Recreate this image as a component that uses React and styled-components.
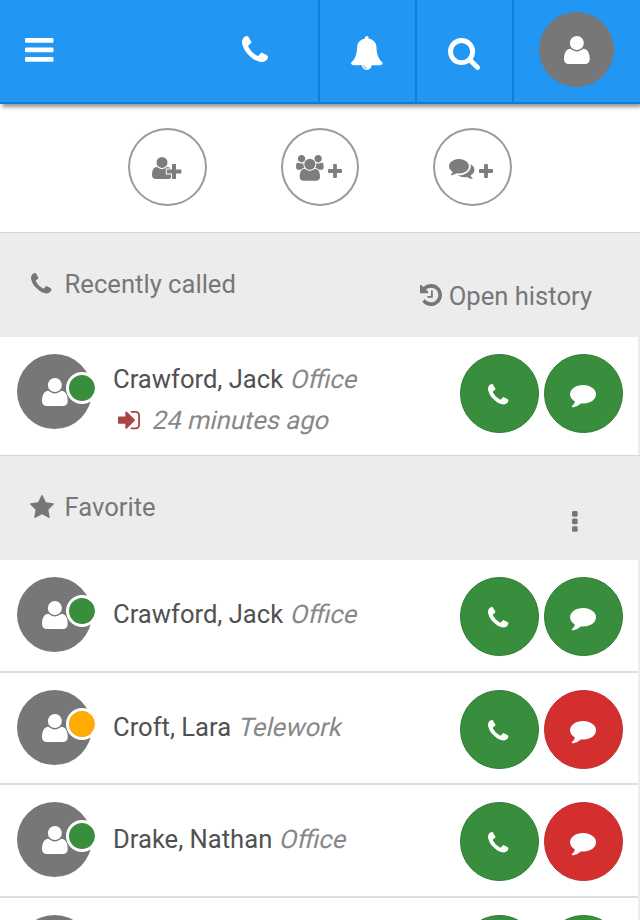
import React from "react";
import styled, { createGlobalStyle } from "styled-components";

const GlobalStyle = createGlobalStyle`
  * { box-sizing: border-box; }
  html, body { margin: 0; padding: 0; }
  body {
    height: 920px;
    overflow: hidden;
    background: #ececec;
    font-family: Roboto, "Liberation Sans", sans-serif;
    font-size: 25.6px;
    color: #515151;
  }
`;

const ICONS = {
  bars: {
    box: [128, 256, 1536, 1280],
    d: "M1664 1344v128q0 26-19 45t-45 19h-1408q-26 0-45-19t-19-45v-128q0-26 19-45t45-19h1408q26 0 45 19t19 45zm0-512v128q0 26-19 45t-45 19h-1408q-26 0-45-19t-19-45v-128q0-26 19-45t45-19h1408q26 0 45 19t19 45zm0-512v128q0 26-19 45t-45 19h-1408q-26 0-45-19t-19-45v-128q0-26 19-45t45-19h1408q26 0 45 19t19 45z",
  },
  phone: {
    box: [192, 128, 1408, 1408],
    d: "M1600 1240q0 27-10 70.5t-21 68.5q-21 50-122 106-94 51-186 51-27 0-52.5-3.5t-57.5-12.5-47.5-14.5-55.5-20.5-49-18q-98-35-175-83-128-79-264.5-215.5t-215.5-264.5q-48-77-83-175-3-9-18-49t-20.5-55.5-14.5-47.5-12.5-57.5-3.5-52.5q0-92 51-186 56-101 106-122 25-11 68.5-21t70.5-10q14 0 21 3 18 6 53 76 11 19 30 54t35 63.5 31 53.5q3 4 17.5 25t21.5 35.5 7 28.5q0 20-28.5 50t-62 55-62 53-28.5 46q0 9 5 22.5t8.5 20.5 14 24 11.5 19q76 137 174 235t235 174q2 1 19 11.5t24 14 20.5 8.5 22.5 5q18 0 46-28.5t53-62 55-62 50-28.5q14 0 28.5 7t35.5 21.5 25 17.5q25 15 53.5 31t63.5 35 54 30q70 35 76 53 3 7 3 21z",
  },
  bell: {
    box: [64, 0, 1664, 1792],
    d: "M912 1696q0-16-16-16-59 0-101.5-42.5t-42.5-101.5q0-16-16-16t-16 16q0 73 51.5 124.5t124.5 51.5q16 0 16-16zm816-288q0 52-38 90t-90 38h-448q0 106-75 181t-181 75-181-75-75-181h-448q-52 0-90-38t-38-90q50-42 91-88t85-119.5 74.5-158.5 50-206 19.5-260q0-152 117-282.5t307-158.5q-8-19-8-39 0-40 28-68t68-28 68 28 28 68q0 20-8 39 190 28 307 158.5t117 282.5q0 139 19.5 260t50 206 74.5 158.5 85 119.5 91 88z",
  },
  search: {
    box: [64, 128, 1664, 1664],
    d: "M1216 832q0-185-131.5-316.5t-316.5-131.5-316.5 131.5-131.5 316.5 131.5 316.5 316.5 131.5 316.5-131.5 131.5-316.5zm512 832q0 52-38 90t-90 38q-54 0-90-38l-343-342q-179 124-399 124-143 0-273.5-55.5t-225-150-150-225-55.5-273.5 55.5-273.5 150-225 225-150 273.5-55.5 273.5 55.5 225 150 150 225 55.5 273.5q0 220-124 399l343 343q37 37 37 90z",
  },
  user: {
    box: [192, 128, 1408, 1536],
    d: "M1600 1405q0 120-73 189.5t-194 69.5h-874q-121 0-194-69.5t-73-189.5q0-53 3.5-103.5t14-109 26.5-108.5 43-97.5 62-81 85.5-53.5 111.5-20q9 0 42 21.5t74.5 48 108 48 133.5 21.5 133.5-21.5 108-48 74.5-48 42-21.5q61 0 111.5 20t85.5 53.5 62 81 43 97.5 26.5 108.5 14 109 3.5 103.5zm-320-893q0 159-112.5 271.5t-271.5 112.5-271.5-112.5-112.5-271.5 112.5-271.5 271.5-112.5 271.5 112.5 112.5 271.5z",
  },
  users: {
    box: [64, 0, 1920, 1792],
    d: "M657 896q-162 5-265 128h-134q-82 0-138-40.5t-56-118.5q0-353 124-353 6 0 43.5 21t97.5 42.5 119 21.5q67 0 133-23-5 37-5 66 0 139 81 256zm1071 637q0 120-73 189.5t-194 69.5h-874q-121 0-194-69.5t-73-189.5q0-53 3.5-103.5t14-109 26.5-108.5 43-97.5 62-81 85.5-53.5 111.5-20q10 0 43 21.5t73 48 107 48 135 21.5 135-21.5 107-48 73-48 43-21.5q61 0 111.5 20t85.5 53.5 62 81 43 97.5 26.5 108.5 14 109 3.5 103.5zm-1024-1277q0 106-75 181t-181 75-181-75-75-181 75-181 181-75 181 75 75 181zm704 384q0 159-112.5 271.5t-271.5 112.5-271.5-112.5-112.5-271.5 112.5-271.5 271.5-112.5 271.5 112.5 112.5 271.5zm576 225q0 78-56 118.5t-138 40.5h-134q-103-123-265-128 81-117 81-256 0-29-5-66 66 23 133 23 59 0 119-21.5t97.5-42.5 43.5-21q124 0 124 353zm-128-609q0 106-75 181t-181 75-181-75-75-181 75-181 181-75 181 75 75 181z",
  },
  plus: {
    box: [192, 128, 1408, 1408],
    d: "M1600 736v192q0 40-28 68t-68 28h-416v416q0 40-28 68t-68 28h-192q-40 0-68-28t-28-68v-416h-416q-40 0-68-28t-28-68v-192q0-40 28-68t68-28h416v-416q0-40 28-68t68-28h192q40 0 68 28t28 68v416h416q40 0 68 28t28 68z",
  },
  comment: {
    box: [0, 256, 1792, 1536],
    d: "M1792 896q0 174-120 321.5t-326 233-450 85.5q-70 0-145-8-198 175-460 242-49 14-114 22-17 2-30.5-9t-17.5-29v-1q-3-4-.5-12t2-10 4.5-9.5l6-9 7-8.5 8-9q7-8 31-34.5t34.5-38 31-39.5 32.5-51 27-59 26-76q-157-89-247.5-220t-90.5-281q0-130 71-248.5t191-204.5 286-136.5 348-50.5q244 0 450 85.5t326 233 120 321.5z",
  },
  comments: {
    box: [0, 256, 1792, 1408],
    d: "M1408 768q0 139-94 257t-256.5 186.5-353.5 68.5q-86 0-176-16-124 88-278 128-36 9-86 16h-3q-11 0-20.5-8t-11.5-21q-1-3-1-6.5t.5-6.5 2-6l2.5-5 3.5-5.5 4-5 4.5-5 4-4.5q5-6 23-25t26-29.5 22.5-29 25-38.5 20.5-44q-124-72-195-177t-71-224q0-139 94-257t256.5-186.5 353.5-68.5 353.5 68.5 256.5 186.5 94 257zm384 256q0 120-71 224.5t-195 176.5q10 24 20.5 44t25 38.5 22.5 29 26 29.5 23 25q1 1 4 4.5t4.5 5 4 5 3.5 5.5l2.5 5 2 6 .5 6.5-1 6.5q-3 14-13 22t-22 7q-50-7-86-16-154-40-278-128-90 16-176 16-271 0-472-132 58 4 88 4 161 0 309-45t264-129q125-92 192-212t67-254q0-77-23-152 129 71 204 178t75 230z",
  },
  history: {
    box: [128, 128, 1536, 1536],
    d: "M1664 896q0 156-61 298t-164 245-245 164-298 61q-172 0-327-72.5t-264-204.5q-7-10-6.5-22.5t8.5-20.5l137-138q10-9 25-9 16 2 23 12 73 95 179 147t225 52q104 0 198.5-40.5t163.5-109.5 109.5-163.5 40.5-198.5-40.5-198.5-109.5-163.5-163.5-109.5-198.5-40.5q-98 0-188 35.5t-160 101.5l137 138q31 30 14 69-17 40-59 40h-448q-26 0-45-19t-19-45v-448q0-42 40-59 39-17 69 14l130 129q107-101 244.5-156.5t284.5-55.5q156 0 298 61t245 164 164 245 61 298zm-640-288v448q0 14-9 23t-23 9h-320q-14 0-23-9t-9-23v-64q0-14 9-23t23-9h224v-352q0-14 9-23t23-9h64q14 0 23 9t9 23z",
  },
  star: {
    box: [64, 32, 1664, 1587],
    d: "M1728 647q0 22-26 48l-363 354 86 500q1 7 1 20 0 21-10.5 35.5t-30.5 14.5q-19 0-40-12l-449-236-449 236q-22 12-40 12-21 0-31.5-14.5t-10.5-35.5q0-6 2-20l86-500-364-354q-25-27-25-48 0-37 56-46l502-73 225-455q19-41 49-41t49 41l225 455 502 73q56 9 56 46z",
  },
  signIn: {
    box: [128, 256, 1536, 1280],
    d: "M1312 896q0 26-19 45l-544 544q-19 19-45 19t-45-19-19-45v-288h-448q-26 0-45-19t-19-45v-384q0-26 19-45t45-19h448v-288q0-26 19-45t45-19 45 19l544 544q19 19 19 45zm352-352v704q0 119-84.5 203.5t-203.5 84.5h-320q-13 0-22.5-9.5t-9.5-22.5q0-4-1-20t-.5-26.5 3-23.5 10-19.5 20.5-6.5h320q66 0 113-47t47-113v-704q0-66-47-113t-113-47h-312l-11.5-1-11.5-3-8-5.5-7-9-2-13.5q0-4-1-20t-.5-26.5 3-23.5 10-19.5 20.5-6.5h320q119 0 203.5 84.5t84.5 203.5z",
  },
  more: {
    box: [0, 0, 384, 1408],
    d: "M96 0h192q40 0 68 28t28 68v192q0 40-28 68t-68 28h-192q-40 0-68-28t-28-68v-192q0-40 28-68t68-28zM96 512h192q40 0 68 28t28 68v192q0 40-28 68t-68 28h-192q-40 0-68-28t-28-68v-192q0-40 28-68t68-28zM96 1024h192q40 0 68 28t28 68v192q0 40-28 68t-68 28h-192q-40 0-68-28t-28-68v-192q0-40 28-68t68-28z",
  },
};

const Svg = styled.svg`
  display: block;
  flex: none;
  fill: currentColor;
  overflow: visible;
`;

function Icon({ name, width }) {
  const { box, d } = ICONS[name];
  return (
    <Svg width={width} height={(width * box[3]) / box[2]} viewBox={box.join(" ")} aria-hidden="true">
      <path d={d} />
    </Svg>
  );
}

function AddUserIcon() {
  const [x, y] = ICONS.user.box;
  return (
    <Svg width="29.4" height="22" viewBox="0 0 29.4 22" aria-hidden="true">
      <path transform={`scale(0.01425) translate(${-x} ${-y})`} d={ICONS.user.d} />
      <path
        d="M20 7h4v5.6h5.4v3.8H24V22h-4v-5.6h-5.2v-3.8H20z"
        stroke="#fff"
        strokeWidth="2"
        paintOrder="stroke"
      />
    </Svg>
  );
}

const Page = styled.div`
  width: 640px;
  height: 920px;
  overflow: hidden;
`;

const Header = styled.header`
  position: relative;
  z-index: 1;
  display: grid;
  grid-template-columns: 191px 129px 97px 97px 1fr;
  height: 104px;
  background: #2196f3;
  border-bottom: 2px solid #0c7cd5;
  box-shadow: 2px 3px 4px rgba(0, 0, 0, 0.42);
  color: #fff;
`;

const HeaderButton = styled.button`
  display: flex;
  align-items: flex-start;
  justify-content: ${(p) => p.$align || "center"};
  padding: ${(p) => p.$pad};
  border: 0;
  border-right: ${(p) => (p.$divided ? "2px solid #0f80da" : "0")};
  background: none;
  color: inherit;
`;

const Avatar = styled.div`
  position: relative;
  display: flex;
  flex: none;
  align-items: flex-start;
  justify-content: center;
  width: 75px;
  height: 75px;
  padding-top: 24px;
  border-radius: 50%;
  background: #777;
  color: #fff;
`;

const Status = styled.span`
  position: absolute;
  top: 17.5px;
  left: 48.7px;
  width: 32px;
  height: 32px;
  border: 3px solid #fff;
  border-radius: 50%;
  background: ${(p) => (p.$state === "away" ? "#ffab00" : "#388e3c")};
  background-clip: padding-box;
`;

const Actions = styled.div`
  display: flex;
  justify-content: center;
  gap: 74px;
  height: 128px;
  padding-top: 24px;
  background: #fff;
`;

const AddButton = styled.button`
  display: flex;
  align-items: flex-start;
  gap: ${(p) => p.$gap || 0}px;
  width: 78.6px;
  height: 78px;
  padding: ${(p) => p.$pad};
  border: 2px solid #9a9a9a;
  border-radius: 50%;
  background: #fff;
  color: #7d7d7d;
`;

const Drop = styled.span`
  display: flex;
  margin-top: ${(p) => p.$by}px;
`;

const SectionHeader = styled.div`
  display: flex;
  align-items: flex-start;
  height: 105px;
  padding-left: 30px;
  border-top: 1px solid #d5d5d5;
  background: #ececec;
  color: #777;
  line-height: 40px;
`;

const SectionIcon = styled.span`
  display: flex;
  justify-content: center;
  width: ${(p) => p.$width}px;
  margin: ${(p) => p.$top}px ${(p) => 34.6 - p.$width}px 0 0;
`;

const SectionTitle = styled.h2`
  flex: 1;
  margin: 31px 0 0;
  font-size: inherit;
  font-weight: 400;
`;

const HistoryLink = styled.div`
  display: flex;
  gap: 6.5px;
  margin: 43px 48px 0 0;
`;

const MoreButton = styled.div`
  display: flex;
  margin: 55px 62px 0 0;
`;

const Row = styled.div`
  display: flex;
  align-items: flex-start;
  width: 638px;
  height: ${(p) => p.$height}px;
  padding: 17px 15px 0 17px;
  border-bottom: ${(p) => (p.$line ? "2px solid #ddd" : "0")};
  background: #fff;
`;

const Details = styled.div`
  flex: 1;
  margin: ${(p) => p.$top}px 0 0 21px;
  line-height: 41px;
  white-space: nowrap;
`;

/* Upright Roboto slanted, which keeps the wider regular letterforms. */
const Slanted = styled.span`
  display: inline-block;
  color: #888;
  transform: skewX(-13deg);
  transform-origin: 0 27px;
`;

const CallTime = styled.div`
  display: flex;
  gap: 12px;
  padding-left: 5px;
`;

const Incoming = styled.span`
  display: flex;
  padding-top: 11px;
  color: #a94442;
`;

const RoundButton = styled.button`
  display: flex;
  flex: none;
  align-items: flex-start;
  justify-content: center;
  width: 78.7px;
  height: 78.7px;
  margin-left: ${(p) => (p.$second ? "5.6px" : "0")};
  padding: ${(p) => (p.$second ? "30.2px 1.4px 0 0" : "28.6px 1.5px 0 0")};
  border: 1px solid ${(p) => (p.$busy ? "#c02828" : "#2a7a2e")};
  border-radius: 50%;
  background: ${(p) => (p.$busy ? "#d32f2f" : "#388e3c")};
  color: #fff;
`;

function Contact({ name, place, state, busy, time, height, line }) {
  return (
    <Row $height={height} $line={line}>
      <Avatar>
        <Icon name="user" width={25.7} />
        <Status $state={state} />
      </Avatar>
      <Details $top={time ? 5 : 17}>
        {name} <Slanted>{place}</Slanted>
        {time && (
          <CallTime>
            <Incoming><Icon name="signIn" width={22} /></Incoming>
            <Slanted>{time}</Slanted>
          </CallTime>
        )}
      </Details>
      <RoundButton aria-label="Call">
        <Icon name="phone" width={20.4} />
      </RoundButton>
      <RoundButton aria-label="Message" $second $busy={busy}>
        <Icon name="comment" width={26} />
      </RoundButton>
    </Row>
  );
}

const favorites = [
  { name: "Crawford, Jack", place: "Office", state: "online", busy: false, height: 113 },
  { name: "Croft, Lara", place: "Telework", state: "away", busy: true, height: 112 },
  { name: "Drake, Nathan", place: "Office", state: "online", busy: true, height: 113 },
  { name: "", place: "", state: "online", busy: false, height: 113 },
];

export default function App() {
  return (
    <Page>
      <GlobalStyle />
      <Header>
        <HeaderButton $align="flex-start" $pad="38px 0 0 25.3px" aria-label="Menu">
          <Icon name="bars" width={28.5} />
        </HeaderButton>
        <HeaderButton $divided $pad="36px 0 0" aria-label="Calls">
          <Icon name="phone" width={26} />
        </HeaderButton>
        <HeaderButton $divided $pad="35.6px 0.6px 0 0" aria-label="Notifications">
          <Icon name="bell" width={31.6} />
        </HeaderButton>
        <HeaderButton $divided $pad="37.7px 1px 0 0" aria-label="Search">
          <Icon name="search" width={32} />
        </HeaderButton>
        <HeaderButton $pad="12px 0.6px 0 0" aria-label="Profile">
          <Avatar>
            <Icon name="user" width={25.7} />
          </Avatar>
        </HeaderButton>
      </Header>

      <Actions>
        <AddButton $pad="27px 0 0 22px" aria-label="Add contact">
          <AddUserIcon />
        </AddButton>
        <AddButton $pad="25px 0 0 13.2px" $gap={4.3} aria-label="Add group">
          <Icon name="users" width={27.7} />
          <Drop $by={9}><Icon name="plus" width={14} /></Drop>
        </AddButton>
        <AddButton $pad="28.7px 0 0 13.4px" $gap={5.3} aria-label="Add conversation">
          <Icon name="comments" width={25.4} />
          <Drop $by={5.3}><Icon name="plus" width={14} /></Drop>
        </AddButton>
      </Actions>

      <SectionHeader>
        <SectionIcon $top={40.1} $width={22.8}><Icon name="phone" width={20.4} /></SectionIcon>
        <SectionTitle>Recently called</SectionTitle>
        <HistoryLink>
          <Drop $by={8.4}><Icon name="history" width={22} /></Drop>
          Open history
        </HistoryLink>
      </SectionHeader>
      <Contact name="Crawford, Jack" place="Office" state="online" time="24 minutes ago" height={118} />

      <SectionHeader>
        <SectionIcon $top={39} $width={24}><Icon name="star" width={24} /></SectionIcon>
        <SectionTitle>Favorite</SectionTitle>
        <MoreButton><Icon name="more" width={5.7} /></MoreButton>
      </SectionHeader>
      {favorites.map((f, i) => (
        <Contact key={i} line {...f} />
      ))}
    </Page>
  );
}
